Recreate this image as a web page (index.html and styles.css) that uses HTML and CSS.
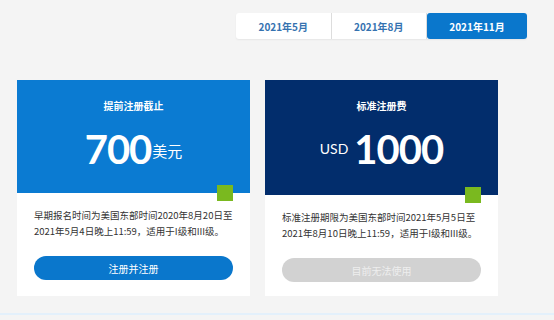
FILE: index.html
```html
<!DOCTYPE html>
<html lang="zh">
<head>
  <meta charset="UTF-8" />
  <title>注册费用</title>
  <link rel="stylesheet" href="styles.css">
</head>
<body>
  <div class="page">
    <div class="tabs">
      <div class="tab">2021年5月</div>
      <div class="tab">2021年8月</div>
      <div class="tab active">2021年11月</div>
    </div>

    <div class="cards">
      <div class="card">
        <div class="card-head early">
          <div class="card-title">提前注册截止</div>
          <div class="price"><span class="amount">700</span><span class="unit">美元</span></div>
          <span class="corner"></span>
        </div>
        <div class="card-body">
          <p>早期报名时间为美国东部时间2020年8月20日至2021年5月4日晚上11:59，适用于I级和III级。</p>
          <button class="btn">注册并注册</button>
        </div>
      </div>

      <div class="card">
        <div class="card-head standard">
          <div class="card-title">标准注册费</div>
          <div class="price"><span class="unit before">USD</span><span class="amount">1000</span></div>
          <span class="corner"></span>
        </div>
        <div class="card-body">
          <p>标准注册期限为美国东部时间2021年5月5日至2021年8月10日晚上11:59，适用于I级和III级。</p>
          <button class="btn disabled">目前无法使用</button>
        </div>
      </div>
    </div>
  </div>
</body>
</html>
```

FILE: styles.css
```css
body {
  margin: 0;
  background: #f4f4f4;
  font-family: "Noto Sans CJK SC", "Liberation Sans", sans-serif;
  color: #333;
}
.page {
  height: 315px;
  border-bottom: 2px solid #e3f0fb;
  box-sizing: border-box;
  padding-top: 13px;
}
.tabs {
  display: flex;
  margin-left: 236px;
  width: 291px;
  height: 26px;
  background: #fff;
  border-radius: 3px;
  box-shadow: 0 1px 2px rgba(0, 0, 0, 0.06);
}
.tab {
  flex: 1;
  display: flex;
  align-items: center;
  justify-content: center;
  font-size: 10px;
  font-weight: bold;
  color: #3572b0;
  border-right: 1px solid #ddd;
}
.tab:last-child {
  border-right: none;
}
.tab.active {
  background: #0a77cc;
  color: #fff;
  border-radius: 3px;
  flex: 0 0 100px;
}
.cards {
  display: flex;
  gap: 15px;
  margin-top: 41px;
  margin-left: 17px;
}
.card {
  width: 233px;
  height: 216px;
  background: #fff;
}
.card-head {
  position: relative;
  height: 113px;
  color: #fff;
  text-align: center;
  box-sizing: border-box;
  padding-top: 19px;
}
.card-head.early {
  background: #0b7bd2;
}
.card-head.standard {
  background: #022d6c;
  height: 115px;
}
.card-title {
  font-size: 10px;
  font-weight: bold;
  line-height: 14px;
}
.price {
  margin-top: 14px;
  display: flex;
  justify-content: center;
  align-items: baseline;
}
.amount {
  font-family: "Lato", "Liberation Sans", sans-serif;
  font-weight: bold;
  font-size: 40px;
  line-height: 44px;
  letter-spacing: -1px;
}
.unit {
  font-size: 15px;
  margin-left: 1px;
  position: relative;
  top: -7px;
}
.unit.before {
  font-family: "Lato", "Liberation Sans", sans-serif;
  font-size: 14px;
  margin: 0 6px 0 0;
  top: -10px;
}
.corner {
  position: absolute;
  right: 17px;
  bottom: -8px;
  width: 16px;
  height: 16px;
  background: #7ab91f;
}
.card-body {
  padding: 14px 16px 0 17px;
}
.card-body p {
  margin: 0;
  font-size: 9.5px;
  line-height: 16px;
  color: #333;
}
.btn {
  display: block;
  width: 199px;
  height: 24px;
  margin-top: 17px;
  border: none;
  border-radius: 12px;
  background: #0a77cc;
  color: #fff;
  font-family: inherit;
  font-size: 10px;
}
.btn.disabled {
  background: #d2d2d2;
  color: #eee;
}
```
